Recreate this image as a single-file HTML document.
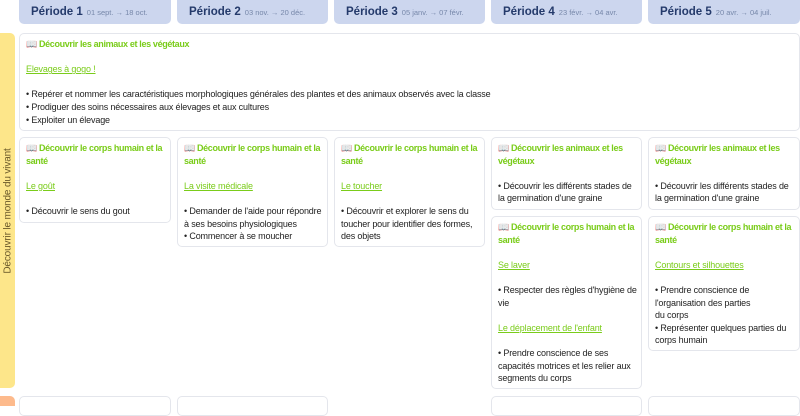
<!DOCTYPE html>
<html><head><meta charset="utf-8"><style>
*{box-sizing:border-box;margin:0;padding:0}
body{width:800px;height:400px;overflow:hidden;background:#fff;font-family:"Liberation Sans",sans-serif;font-size:9px;letter-spacing:-0.15px;color:#222;position:relative}
.h{position:absolute;top:0;height:24px;background:#ccd6ee;border-radius:0 0 5px 5px;padding:6px 0 0 12px;color:#243a6b;font-weight:bold;font-size:11.5px;white-space:nowrap;letter-spacing:0}
.h span{font-weight:normal;font-size:7.5px;color:#7788aa;margin-left:4px}
.c{position:absolute;background:#fff;border:1px solid #e4e6ec;border-radius:5px;padding:4px 6px;line-height:12.6px;white-space:nowrap;overflow:hidden}
.t{color:#7acc1a;font-weight:bold;letter-spacing:-0.35px}
.l{color:#7acc1a;text-decoration:underline}
.g{height:12.6px}
.side{position:absolute;left:0;top:33px;width:15px;height:355px;background:#fde68a;border-radius:0 5px 5px 0}
.side div{position:absolute;left:8px;top:178px;transform:translate(-50%,-50%) rotate(-90deg);white-space:nowrap;color:#6b5a2a;font-size:10px}
</style></head><body>
<div class="h" style="left:19px;width:152px">Période 1<span>01 sept. → 18 oct.</span></div>
<div class="h" style="left:177px;width:151px">Période 2<span>03 nov. → 20 déc.</span></div>
<div class="h" style="left:334px;width:151px">Période 3<span>05 janv. → 07 févr.</span></div>
<div class="h" style="left:491px;width:151px">Période 4<span>23 févr. → 04 avr.</span></div>
<div class="h" style="left:648px;width:152px">Période 5<span>20 avr. → 04 juil.</span></div>
<div class="side"><div>Découvrir le monde du vivant</div></div>
<div style="position:absolute;left:0;top:396px;width:15px;height:10px;background:#fdba8c;border-radius:0 5px 0 0"></div>

<div class="c" style="left:19px;top:33px;width:781px;height:98px"><div class="t">📖 Découvrir les animaux et les végétaux</div><div class="g"></div><div class="l">Elevages à gogo !</div><div class="g"></div><div>• Repérer et nommer les caractéristiques morphologiques générales des plantes et des animaux observés avec la classe</div><div>• Prodiguer des soins nécessaires aux élevages et aux cultures</div><div>• Exploiter un élevage</div></div>

<div class="c" style="left:19px;top:137px;width:152px;height:86px"><div class="t">📖 Découvrir le corps humain et la<br>santé</div><div class="g"></div><div class="l">Le goût</div><div class="g"></div><div>• Découvrir le sens du gout</div></div>
<div class="c" style="left:177px;top:137px;width:151px;height:110px"><div class="t">📖 Découvrir le corps humain et la<br>santé</div><div class="g"></div><div class="l">La visite médicale</div><div class="g"></div><div>• Demander de l'aide pour répondre<br>à ses besoins physiologiques</div><div>• Commencer à se moucher</div></div>
<div class="c" style="left:334px;top:137px;width:151px;height:110px"><div class="t">📖 Découvrir le corps humain et la<br>santé</div><div class="g"></div><div class="l">Le toucher</div><div class="g"></div><div>• Découvrir et explorer le sens du<br>toucher pour identifier des formes,<br>des objets</div></div>
<div class="c" style="left:491px;top:137px;width:151px;height:73px"><div class="t">📖 Découvrir les animaux et les<br>végétaux</div><div class="g"></div><div>• Découvrir les différents stades de<br>la germination d'une graine</div></div>
<div class="c" style="left:648px;top:137px;width:152px;height:73px"><div class="t">📖 Découvrir les animaux et les<br>végétaux</div><div class="g"></div><div>• Découvrir les différents stades de<br>la germination d'une graine</div></div>
<div class="c" style="left:491px;top:216px;width:151px;height:173px"><div class="t">📖 Découvrir le corps humain et la<br>santé</div><div class="g"></div><div class="l">Se laver</div><div class="g"></div><div>• Respecter des règles d'hygiène de<br>vie</div><div class="g"></div><div class="l">Le déplacement de l'enfant</div><div class="g"></div><div>• Prendre conscience de ses<br>capacités motrices et les relier aux<br>segments du corps</div></div>
<div class="c" style="left:648px;top:216px;width:152px;height:135px"><div class="t">📖 Découvrir le corps humain et la<br>santé</div><div class="g"></div><div class="l">Contours et silhouettes</div><div class="g"></div><div>• Prendre conscience de<br>l'organisation des parties<br>du corps</div><div>• Représenter quelques parties du<br>corps humain</div></div>

<div class="c" style="left:19px;top:396px;width:152px;height:20px"></div>
<div class="c" style="left:177px;top:396px;width:151px;height:20px"></div>
<div class="c" style="left:491px;top:396px;width:151px;height:20px"></div>
<div class="c" style="left:648px;top:396px;width:152px;height:20px"></div>
</body></html>
